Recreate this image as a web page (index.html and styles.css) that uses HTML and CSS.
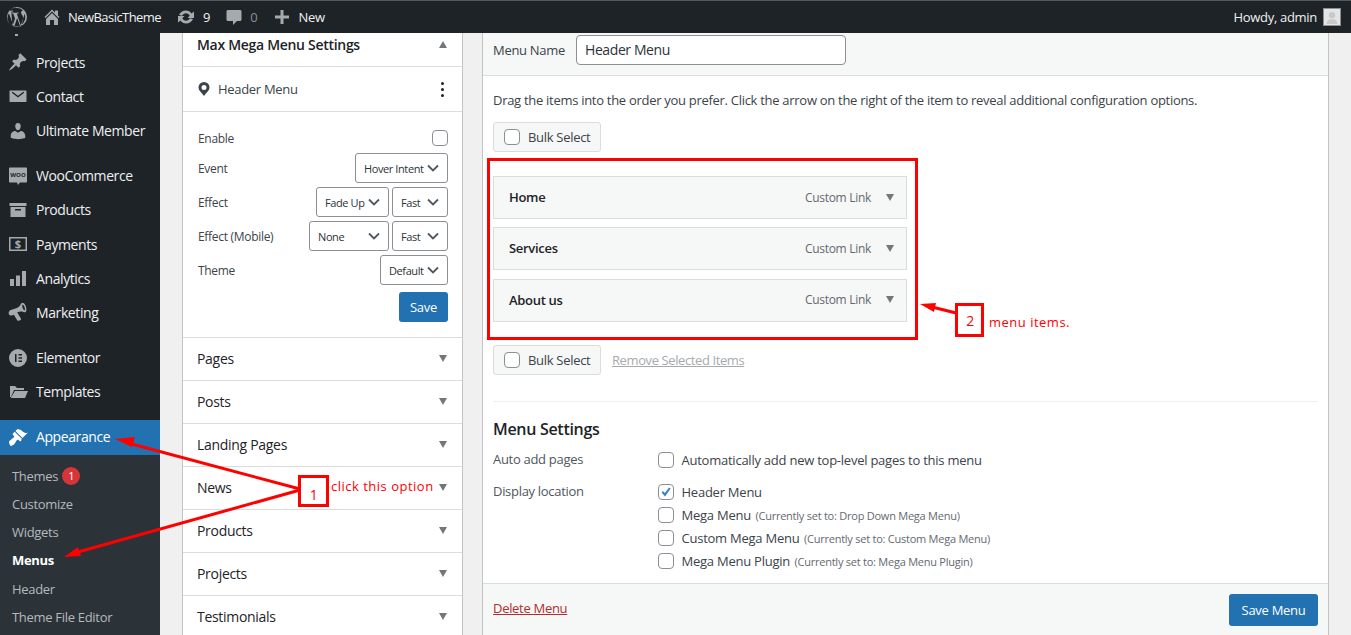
FILE: index.html
```html
<!DOCTYPE html>
<html lang="en">
<head>
    <meta charset="UTF-8">
    <meta name="viewport" content="width=device-width, initial-scale=1.0">
    <title>Menus</title>
    <link rel="stylesheet" href="styles.css">
</head>
<body>
    <div id="adminbar">
        <svg class="ab-logo" viewBox="0 0 20 20"><path d="M10 0a10 10 0 1 0 0 20 10 10 0 0 0 0-20zm0 1a9 9 0 0 1 6.1 2.4c-1.2 0-2 1-2 2.1 0 1 .6 1.8 1.2 2.8.5.8.9 1.800.9 3.300 0 1-.4 2.200-.9 3.800l-1.200 4-4.300-12.800c.7 0 1.400-.1 1.400-.1.6-.1.6-1 0-1 0 0-1.900.2-3.100.2-1.100 0-3-.2-3-.2-.6 0-.7 1-.1 1 0 0 .6.1 1.200.1l1.800 4.900-2.500 7.500L4.300 4.700c.7 0 1.300-.1 1.300-.1.6-.1.6-1 0-1 0 0-1.900.2-3.100.2h-.6A9 9 0 0 1 10 1zM1.900 6.300L6.700 19.400A9 9 0 0 1 1.900 6.300zm8.200 4.800l2.900 7.900a9 9 0 0 1-5.500.1zm7.200-4.600a9 9 0 0 1-3.400 11.700l2.700-7.900c.5-1.300.7-2.300.7-3.200z"/></svg>
        <svg class="ab-icon ab-home" viewBox="0 0 20 20"><path d="M16 8.500l1.500 1.500-1 1L10 4.500 3.500 11l-1-1L10 2.500l3 3V3.500h3zM10 6l6 6v6h-4v-5H8v5H4v-6z"/></svg>
        <span class="ab-text ab-site">NewBasicTheme</span>
        <svg class="ab-icon ab-update" viewBox="0 0 20 20"><path d="M10 3.500c2.300 0 4.300 1.200 5.500 3L18 4.500V11h-6.500l2.200-2.200C13 7.300 11.600 6.300 10 6.300c-1.700 0-3.200 1-3.900 2.500L3 8C4 5.400 6.800 3.500 10 3.500zM2 9h6.500l-2.200 2.200c.7 1.500 2.100 2.500 3.700 2.500 1.700 0 3.200-1 3.900-2.500l3.100.8c-1 2.600-3.800 4.500-7 4.500-2.300 0-4.300-1.200-5.500-3L2 15.500z"/></svg>
        <span class="ab-text ab-count">9</span>
        <svg class="ab-icon ab-comment" viewBox="0 0 20 20"><path d="M4 3h12c.8 0 1.500.7 1.500 1.500v8c0 .8-.7 1.500-1.500 1.500h-3l-4 4v-4H4c-.8 0-1.500-.7-1.500-1.500v-8C2.500 3.700 3.200 3 4 3z"/></svg>
        <span class="ab-text ab-zero">0</span>
        <svg class="ab-icon ab-plus" viewBox="0 0 20 20"><path d="M8.500 3h3v5.500H17v3h-5.500V17h-3v-5.500H3v-3h5.500z"/></svg>
        <span class="ab-text ab-new">New</span>
        <span class="ab-text ab-howdy">Howdy, admin</span>
        <span class="ab-avatar"><svg viewBox="0 0 18 18"><circle cx="9" cy="7" r="3.500"/><path d="M3 17c0-4 2.500-5.500 6-5.500s6 1.500 6 5.500z"/></svg></span>
    </div>

    <div id="wrap">
        <nav id="sidebar">
            <span class="sliver"></span>
            <ul class="menu-group">
                <li class="menu-item">
                    <svg viewBox="0 0 20 20"><path d="M10.440 3.020l1.820-1.820 6.360 6.350-1.830 1.820c-1.050-.68-2.480-.57-3.410.36l-.75.75c-.92.93-1.040 2.350-.35 3.410l-1.830 1.820-2.410-2.410-2.800 2.790c-.42.42-3.380 2.710-3.800 2.290s1.860-3.390 2.280-3.810l2.790-2.790L4.100 9.360l1.830-1.820c1.050.69 2.480.57 3.400-.36l.75-.75c.93-.92 1.050-2.350.36-3.410z"/></svg>
                    Projects
                </li>
                <li class="menu-item">
                    <svg viewBox="0 0 20 20"><path d="M2 4.500h16c.3 0 .5.200.5.500v10.500c0 .3-.2.500-.5.500H2c-.3 0-.5-.2-.5-.5V5c0-.3.200-.5.500-.5zm1.800 2.200L10 11.500l6.200-4.800-.8-1L10 9.800 4.600 5.700z" fill-rule="evenodd"/></svg>
                    Contact
                </li>
                <li class="menu-item">
                    <svg viewBox="0 0 20 20"><path d="M10 9.250c-2.270 0-2.730-3.440-2.730-3.440C7 4.020 7.820 2 9.970 2c2.160 0 2.980 2.020 2.710 3.810 0 0-.41 3.440-2.680 3.440zm0 2.570L12.720 10c2.390 0 4.520 2.330 4.520 4.530v2.490s-3.650 1.130-7.240 1.130c-3.650 0-7.240-1.130-7.240-1.130v-2.490c0-2.250 1.940-4.480 4.470-4.480z"/></svg>
                    Ultimate Member
                </li>
            </ul>
            <ul class="menu-group">
                <li class="menu-item">
                    <svg viewBox="0 0 20 20"><path d="M2 1.500h16c.6 0 1 .4 1 1v13c0 .6-.4 1-1 1h-6l-2 2.500-1-2.500H2c-.6 0-1-.4-1-1v-13c0-.6.4-1 1-1z"/><text x="10" y="11" class="woo-text">WOO</text></svg>
                    WooCommerce
                </li>
                <li class="menu-item">
                    <svg viewBox="0 0 20 20"><path d="M1.500 3h17v3h-17zM2.500 7h15v10h-15zM7 9v1.500h6V9z" fill-rule="evenodd"/></svg>
                    Products
                </li>
                <li class="menu-item">
                    <svg viewBox="0 0 20 20"><path d="M1 3h18v14H1zm1.500 1.500v11h15v-11z" fill-rule="evenodd"/><text x="10" y="14" class="pay-text">$</text></svg>
                    Payments
                </li>
                <li class="menu-item">
                    <svg viewBox="0 0 20 20"><path d="M2 11h4v7H2zM8 7.500h4V18H8zM14 3h4v15h-4z"/></svg>
                    Analytics
                </li>
                <li class="menu-item">
                    <svg viewBox="0 0 20 20"><path transform="rotate(-18 10 10)" d="M17 1.500c1.500 0 2.500 2.500 2.500 5s-1 5-2.500 5c-.6 0-1-.3-1.500-.8-1.500-1.200-3.500-1.700-6-1.700l1.500 7.500c.1.600-.4 1-1 1H8c-.5 0-.9-.3-1-.8L5.500 10.500H4c-1.700 0-3-1-3-2.500s1.300-3 3-3h5c2.800 0 5-1 6.500-2.700.5-.5 1-.8 1.500-.8zm0 2c-.7 0-1 1.500-1 3s.3 3 1 3 1-1.500 1-3-.3-3-1-3z" fill-rule="evenodd"/></svg>
                    Marketing
                </li>
            </ul>
            <ul class="menu-group">
                <li class="menu-item">
                    <svg viewBox="0 0 20 20"><path d="M10 1a9 9 0 1 0 0 18 9 9 0 0 0 0-18zM7 6h1.500v8H7zm3.500 0H14v1.500h-3.500zm0 3.200H14v1.500h-3.500zm0 3.300H14V14h-3.500z" fill-rule="evenodd"/></svg>
                    Elementor
                </li>
                <li class="menu-item">
                    <svg viewBox="0 0 20 20"><path d="M2 4h5l2 2h7v2H6L3 15H2zM6.800 9H20l-3 7H2.800z"/></svg>
                    Templates
                </li>
            </ul>
            <ul class="menu-group">
                <li class="menu-item current">
                    <svg viewBox="0 0 20 20"><path d="M14.480 11.060L7.410 3.990l1.500-1.500c.5-.56 2.300-.47 3.510.32 1.210.8 1.430 1.280 2.910 2.100 1.180.64 2.450 1.260 4.450.85zm-.71.71L6.700 4.700 4.930 6.470c-.39.39-.39 1.020 0 1.410l1.060 1.060c.39.39.39 1.030 0 1.420-.6.600-1.430 1.110-2.210 1.690-.35.26-.7.530-1.010.84C1.430 13.230.96 14.300 1.100 15.500c.13 1.100.7 2.600 1.500 3.400 1.200-.2 2.900-1 3.800-2 .8-.9 1.200-2 1.800-3 .5-.7 1.100-1.200 1.700-1.200.3 0 .5.100.7.300l1.060 1.060c.39.39 1.020.39 1.410 0z"/></svg>
                    Appearance
                </li>
            </ul>
            <ul class="submenu">
                <li>Themes <span class="badge">1</span></li>
                <li>Customize</li>
                <li>Widgets</li>
                <li class="sub-current">Menus</li>
                <li>Header</li>
                <li>Theme File Editor</li>
            </ul>
        </nav>

        <main id="content">
            <aside id="accordion">
                <div class="acc-head">
                    <h3>Max Mega Menu Settings</h3>
                    <span class="tri tri-up"></span>
                </div>
                <div class="mm-title">
                    <svg class="pin" viewBox="0 0 12 14"><path d="M6 0a5.500 5.500 0 0 0-5.500 5.500C.5 8.500 4 11 6 14c2-3 5.500-5.500 5.500-8.500A5.500 5.500 0 0 0 6 0zm0 3a2.500 2.500 0 1 1 0 5 2.500 2.500 0 0 1 0-5z" fill-rule="evenodd"/></svg>
                    <span>Header Menu</span>
                    <span class="kebab"><i></i><i></i><i></i></span>
                </div>
                <div class="mm-form">
                    <div class="mm-row mm-row-enable">
                        <label>Enable</label>
                        <span class="check"></span>
                    </div>
                    <div class="mm-row">
                        <label>Event</label>
                        <span class="mm-fields"><select class="w-event"><option>Hover Intent</option></select></span>
                    </div>
                    <div class="mm-row">
                        <label>Effect</label>
                        <span class="mm-fields">
                            <select class="w-effect"><option>Fade Up</option></select>
                            <select class="w-speed"><option>Fast</option></select>
                        </span>
                    </div>
                    <div class="mm-row">
                        <label>Effect (Mobile)</label>
                        <span class="mm-fields">
                            <select class="w-mobile"><option>None</option></select>
                            <select class="w-speed"><option>Fast</option></select>
                        </span>
                    </div>
                    <div class="mm-row">
                        <label>Theme</label>
                        <span class="mm-fields"><select class="w-theme"><option>Default</option></select></span>
                    </div>
                    <div class="mm-save"><button class="btn-primary btn-save" type="button">Save</button></div>
                </div>
                <div class="acc-item">Pages<span class="tri"></span></div>
                <div class="acc-item">Posts<span class="tri"></span></div>
                <div class="acc-item">Landing Pages<span class="tri"></span></div>
                <div class="acc-item">News<span class="tri"></span></div>
                <div class="acc-item">Products<span class="tri"></span></div>
                <div class="acc-item">Projects<span class="tri"></span></div>
                <div class="acc-item">Testimonials<span class="tri"></span></div>
            </aside>

            <section id="menu-panel">
                <div class="panel-head">
                    <label>Menu Name</label>
                    <input class="menu-name" type="text" value="Header Menu">
                </div>
                <div class="panel-body">
                    <p class="hint">Drag the items into the order you prefer. Click the arrow on the right of the item to reveal additional configuration options.</p>
                    <div class="bulk"><span class="check"></span>Bulk Select</div>
                    <ul class="menu-items">
                        <li>Home<span class="item-type">Custom Link</span><span class="tri"></span></li>
                        <li>Services<span class="item-type">Custom Link</span><span class="tri"></span></li>
                        <li>About us<span class="item-type">Custom Link</span><span class="tri"></span></li>
                    </ul>
                    <div class="bulk-row">
                        <div class="bulk"><span class="check"></span>Bulk Select</div>
                        <a class="remove-link" href="#">Remove Selected Items</a>
                    </div>
                    <div class="settings">
                        <h3>Menu Settings</h3>
                        <div class="set-row">
                            <span class="set-label">Auto add pages</span>
                            <div class="set-opts">
                                <div class="opt"><span class="check"></span>Automatically add new top-level pages to this menu</div>
                            </div>
                        </div>
                        <div class="set-row set-row-loc">
                            <span class="set-label">Display location</span>
                            <div class="set-opts">
                                <div class="opt"><span class="check"><svg viewBox="0 0 16 16"><path d="M3 8.500l1.500-1.700 2.200 2.200L11.500 2.800 13.300 4 6.900 13z"/></svg></span>Header Menu</div>
                                <div class="opt"><span class="check"></span>Mega Menu <small>(Currently set to: Drop Down Mega Menu)</small></div>
                                <div class="opt"><span class="check"></span>Custom Mega Menu <small>(Currently set to: Custom Mega Menu)</small></div>
                                <div class="opt"><span class="check"></span>Mega Menu Plugin <small>(Currently set to: Mega Menu Plugin)</small></div>
                            </div>
                        </div>
                    </div>
                </div>
                <div class="panel-foot">
                    <a class="delete-link" href="#">Delete Menu</a>
                    <button class="btn-primary btn-menu" type="button">Save Menu</button>
                </div>
            </section>
        </main>
    </div>

    <!-- red notes drawn on top of the screenshot -->
    <svg id="notes" viewBox="0 0 1351 635">
        <path class="note-line" d="M300 489L128 443"/>
        <path class="note-head" d="M115 439l20-2-3 10z"/>
        <path class="note-line" d="M300 490L78 552"/>
        <path class="note-head" d="M64 557l14-10 3 9z"/>
        <path class="note-line" d="M956 313L932 307"/>
        <path class="note-head" d="M920 304l16-1-2 9z"/>
    </svg>
    <div class="note-box note-box-1">1</div>
    <div class="note-text note-text-1">click this option</div>
    <div class="note-box note-box-2">2</div>
    <div class="note-text note-text-2">menu items.</div>
    <div class="note-frame"></div>
</body>
</html>
```

FILE: styles.css
```css
*{
    margin:0;
    padding:0;
    box-sizing:border-box;
    font-family:"Open Sans", "Noto Sans", Arial, sans-serif;
}

body{
    width:1351px;
    height:635px;
    overflow:hidden;
    background-color:#f0f0f1;
    color:#3c434a;
    font-size:13px;
    letter-spacing:-0.3px;
    position:relative;
}

ul{
    list-style:none;
}

/* admin bar */
#adminbar{
    display:flex;
    align-items:center;
    height:33px;
    background-color:#1d2327;
    border-top:1px solid #555a5e;
    color:#f0f0f1;
}
.ab-logo{
    width:20px;
    height:20px;
    margin-left:7px;
    fill:#a7aaad;
}
.ab-icon{
    width:20px;
    height:20px;
    fill:#a7aaad;
}
.ab-home{
    margin-left:15px;
}
.ab-site{
    margin-left:6px;
    letter-spacing:-0.55px;
}
.ab-update{
    margin-left:15px;
}
.ab-count{
    margin-left:7px;
}
.ab-comment{
    margin-left:14px;
}
.ab-zero{
    margin-left:6px;
    color:#8c8f94;
}
.ab-plus{
    margin-left:15px;
}
.ab-new{
    margin-left:6px;
}
.ab-howdy{
    margin-left:auto;
}
.ab-avatar{
    display:block;
    width:18px;
    height:18px;
    margin:0 10px 0 6px;
    background-color:#e4e4e4;
    border:1px solid #8c8f94;
}
.ab-avatar svg{
    display:block;
    width:100%;
    height:100%;
    fill:#c9c9c9;
}

#wrap{
    display:flex;
    height:602px;
}

/* sidebar */
#sidebar{
    flex:0 0 160px;
    background-color:#1d2327;
    padding-top:13px;
    position:relative;
    color:#f0f0f1;
    font-size:14px;
    letter-spacing:-0.4px;
}
.sliver{
    position:absolute;
    top:1px;
    left:15px;
    width:3px;
    height:2px;
    background-color:#a7aaad;
}
.menu-group{
    margin-bottom:10.500px;
}
.menu-item{
    display:flex;
    align-items:center;
    height:34.300px;
    padding:0 0 2px 8px;
    gap:8px;
}
.menu-item svg{
    flex:0 0 20px;
    width:20px;
    height:20px;
    fill:#a7aaad;
}
.menu-item.current{
    background-color:#2271b1;
    color:#fff;
}
.menu-item.current svg{
    fill:#fff;
}
.woo-text{
    font-size:6px;
    font-weight:700;
    letter-spacing:0;
    text-anchor:middle;
    fill:#1d2327;
}
.pay-text{
    font-size:11px;
    font-weight:700;
    letter-spacing:0;
    text-anchor:middle;
}
.submenu{
    margin-top:-10.500px;
    background-color:#2c3338;
    padding-top:7px;
    height:190px;
    color:#b4b9be;
    font-size:13px;
    letter-spacing:-0.3px;
}
.submenu li{
    display:flex;
    align-items:center;
    height:28.200px;
    padding-left:12px;
    gap:4px;
}
.submenu .sub-current{
    color:#fff;
    font-weight:700;
}
.badge{
    display:inline-block;
    width:18px;
    height:18px;
    border-radius:50%;
    background-color:#d63638;
    color:#fff;
    font-size:11px;
    line-height:18px;
    text-align:center;
}

/* content columns */
#content{
    flex:1;
    display:flex;
    align-items:flex-start;
    padding-left:22px;
}

#accordion{
    flex:0 0 281px;
    background-color:#fff;
    border-left:1px solid #c3c4c7;
    border-right:1px solid #c3c4c7;
}
.acc-head{
    display:flex;
    justify-content:space-between;
    align-items:center;
    height:34px;
    padding:0 15px 10px 14px;
    background-color:#fff;
    border-bottom:1px solid #dcdcde;
}
.acc-head h3{
    font-size:14px;
    font-weight:600;
    color:#1d2327;
}
.tri{
    width:0;
    height:0;
    border-left:4.500px solid transparent;
    border-right:4.500px solid transparent;
    border-top:7px solid #72777c;
}
.tri-up{
    border-top:none;
    border-bottom:7px solid #72777c;
}
.mm-title{
    display:flex;
    align-items:center;
    height:45px;
    padding:0 15px;
    border-bottom:1px solid #dcdcde;
    font-size:13px;
}
.pin{
    width:12px;
    height:14px;
    margin-right:8px;
    fill:#3c434a;
}
.kebab{
    display:flex;
    flex-direction:column;
    gap:3px;
    margin-left:auto;
    padding-right:3.500px;
}
.kebab i{
    display:block;
    width:3px;
    height:3px;
    background-color:#1d2327;
    border-radius:50%;
}
.mm-form{
    height:226px;
    padding:13px 14px 0 15px;
    border-bottom:1px solid #dcdcde;
    font-size:12px;
}
.mm-row{
    display:flex;
    justify-content:space-between;
    align-items:center;
    height:34px;
}
.mm-row-enable{
    height:26px;
}
.mm-fields{
    display:flex;
    gap:3px;
}
.mm-fields select{
    height:30px;
    padding:0 20px 0 8px;
    appearance:none;
    background:#fff url("data:image/svg+xml,%3Csvg xmlns='http://www.w3.org/2000/svg' width='12' height='8'%3E%3Cpath d='M1 1.500l5 5 5-5' fill='none' stroke='%2350575e' stroke-width='1.800'/%3E%3C/svg%3E") no-repeat right 8px center;
    border:1px solid #8c8f94;
    border-radius:3px;
    color:#2c3338;
    font-size:11px;
    letter-spacing:-0.4px;
}
.w-event{
    width:93px;
}
.w-effect{
    width:73px;
}
.w-speed{
    width:56px;
}
.w-mobile{
    width:80px;
}
.w-theme{
    width:68px;
}
.mm-save{
    display:flex;
    justify-content:flex-end;
    margin-top:5px;
}
.btn-primary{
    background-color:#2271b1;
    color:#fff;
    border:none;
    border-radius:3px;
    font-size:13px;
    letter-spacing:-0.3px;
}
.btn-save{
    width:49px;
    height:30px;
}
.check{
    display:block;
    flex:0 0 16px;
    width:16px;
    height:16px;
    background-color:#fff;
    border:1px solid #8c8f94;
    border-radius:4px;
}
.check svg{
    display:block;
    width:14px;
    height:14px;
    fill:#3582c4;
}
.acc-item{
    display:flex;
    justify-content:space-between;
    align-items:center;
    height:43px;
    padding:0 15px 2px 14px;
    border-bottom:1px solid #dcdcde;
    color:#1d2327;
    font-size:14px;
}

/* right panel */
#menu-panel{
    flex:0 0 847px;
    height:602px;
    margin-left:19px;
    display:flex;
    flex-direction:column;
    background-color:#fff;
    border-left:1px solid #c3c4c7;
    border-right:1px solid #c3c4c7;
}
.panel-head{
    display:flex;
    align-items:center;
    gap:11px;
    height:43px;
    padding:0 0 9px 10px;
    background-color:#f6f7f7;
    border-bottom:1px solid #dcdcde;
}
.menu-name{
    width:270px;
    height:30px;
    padding:0 8px;
    border:1px solid #8c8f94;
    border-radius:4px;
    color:#2c3338;
    font-size:14px;
    letter-spacing:-0.4px;
}
.panel-body{
    flex:1;
    padding:0 10px;
}
.hint{
    margin-top:15px;
    line-height:18px;
    letter-spacing:-0.29px;
}
.bulk{
    display:flex;
    align-items:center;
    gap:8px;
    width:108px;
    height:30px;
    margin-top:13px;
    padding-left:10px;
    background-color:#f6f7f7;
    border:1px solid #dcdcde;
    border-radius:3px;
}
.menu-items{
    margin-top:24px;
}
.menu-items li{
    display:flex;
    align-items:center;
    width:414px;
    height:43px;
    margin-bottom:8.400px;
    padding:0 12px 1px 15px;
    background-color:#f6f7f7;
    border:1px solid #dcdcde;
    color:#1d2327;
    font-weight:600;
}
.item-type{
    margin-left:auto;
    margin-right:15px;
    color:#646970;
    font-size:12px;
    font-weight:400;
}
.bulk-row{
    display:flex;
    align-items:center;
    gap:11px;
    margin-top:23.500px;
    padding-bottom:26px;
    border-bottom:1px solid #f0f0f1;
}
.bulk-row .bulk{
    margin-top:0;
}
.remove-link{
    color:#a7aaad;
    font-size:13px;
    letter-spacing:-0.4px;
}
.settings h3{
    margin-top:16px;
    font-size:16px;
    font-weight:600;
    color:#1d2327;
}
.set-row{
    display:flex;
    margin-top:10px;
}
.set-row-loc{
    margin-top:14px;
}
.set-label{
    flex:0 0 165px;
    color:#50575e;
}
.set-opts{
    display:flex;
    flex-direction:column;
    gap:7px;
    margin-top:2px;
}
.opt{
    display:flex;
    align-items:center;
    gap:7.500px;
    height:16px;
    letter-spacing:-0.24px;
}
.opt small{
    margin-left:-3px;
    color:#646970;
    font-size:11px;
}
.panel-foot{
    display:flex;
    justify-content:space-between;
    align-items:center;
    height:52px;
    padding:0 10px;
    background-color:#f6f7f7;
    border-top:1px solid #dcdcde;
}
.delete-link{
    margin-bottom:4px;
    color:#b32d2e;
}
.btn-menu{
    width:89px;
    height:32px;
}

/* annotations */
#notes{
    position:absolute;
    top:0;
    left:0;
    width:1351px;
    height:635px;
    pointer-events:none;
}
.note-line{
    fill:none;
    stroke:#ff0000;
    stroke-width:3;
}
.note-head{
    fill:#ff0000;
}
.note-box{
    position:absolute;
    display:flex;
    align-items:flex-end;
    justify-content:center;
    background-color:#fff;
    border:3px solid #ff0000;
    color:#ff0000;
    font-size:14px;
    padding-bottom:0;
}
.note-box-1{
    top:475px;
    left:298px;
    width:31px;
    height:32px;
}
.note-box-2{
    top:303px;
    left:955px;
    width:29px;
    height:34px;
    padding:0 0 4px 1px;
}
.note-text{
    position:absolute;
    color:#ff0000;
    font-size:13px;
    letter-spacing:0.5px;
}
.note-text-1{
    top:477px;
    left:331px;
}
.note-text-2{
    top:313px;
    left:989px;
}
.note-frame{
    position:absolute;
    top:158px;
    left:487px;
    width:431px;
    height:182px;
    border:3px solid #ff0000;
    pointer-events:none;
}
```
